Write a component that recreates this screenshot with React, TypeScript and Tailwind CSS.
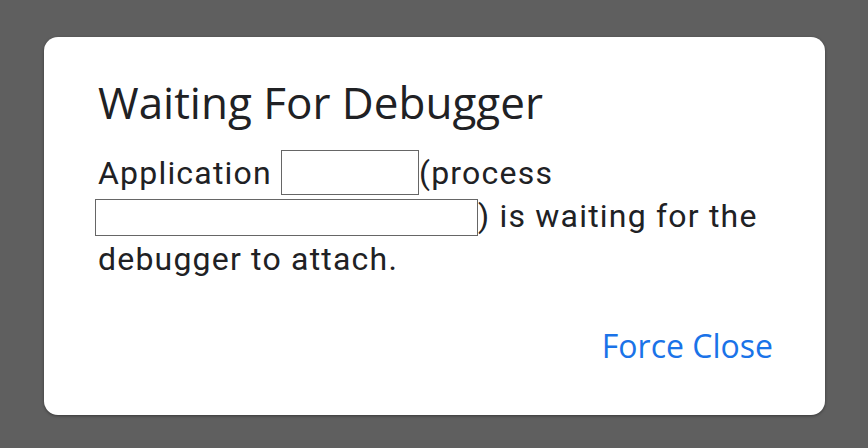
export default function App() {
  return (
    <div className="w-[868px] h-[448px] bg-[#5f5f5f] flex items-start pl-[44px] pt-[37px]">
      <div className="w-[781px] h-[378px] bg-white rounded-[14px] shadow-[0_1px_3px_rgba(0,0,0,0.4)] flex flex-col pl-[54px] pr-[52px] pt-[39px] pb-[51px]">
        <div className="text-[44px] leading-[52px] text-[#202124] font-['Open_Sans',sans-serif]">Waiting For Debugger</div>
        <div className="mt-[24px] text-[32px] leading-[43px] text-[#202124] font-['Roboto',sans-serif] tracking-[1.2px]">
          Application{" "}
          <span className="inline-block align-[-11px] -mt-[2px] w-[138px] h-[45px] border border-[#666]"></span>(process{" "}
          <span className="inline-block align-[-9px] -ml-[3px] w-[383px] h-[37px] border border-[#666]"></span>) is waiting for the debugger to attach.
        </div>
        <div className="mt-auto flex justify-end">
          <span className="text-[32px] leading-[36px] text-[#1a73e8] font-['Open_Sans',sans-serif] font-medium">Force Close</span>
        </div>
      </div>
    </div>
  );
}
